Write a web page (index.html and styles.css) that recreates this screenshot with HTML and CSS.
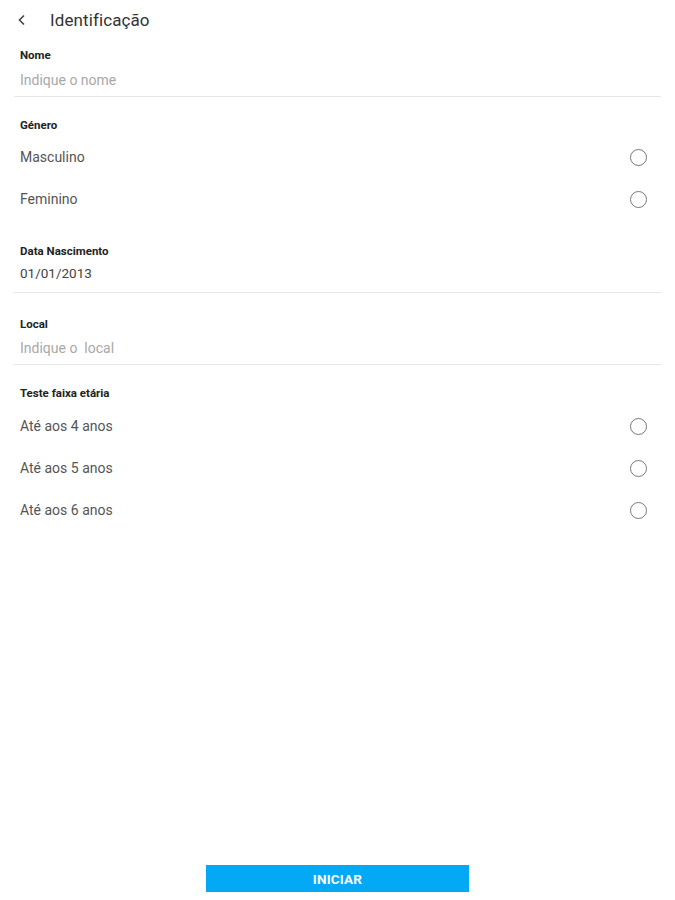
FILE: index.html
```html
<!DOCTYPE html>
<html lang="pt">
<head>
<meta charset="utf-8">
<title>Identificação</title>
<link rel="stylesheet" href="styles.css">
</head>
<body>
<div class="screen">
  <header class="header">
    <span class="back">
      <svg width="10" height="12" viewBox="0 0 10 12"><path d="M7 1.5 L2.5 6 L7 10.5" fill="none" stroke="#444" stroke-width="1.6"/></svg>
    </span>
    <span class="title">Identificação</span>
  </header>

  <section class="field field-nome">
    <div class="label">Nome</div>
    <div class="value placeholder">Indique o nome</div>
  </section>

  <section class="group group-genero">
    <div class="label">Género</div>
    <div class="option"><span>Masculino</span><span class="radio"></span></div>
    <div class="option"><span>Feminino</span><span class="radio"></span></div>
  </section>

  <section class="field field-data">
    <div class="label">Data Nascimento</div>
    <div class="value filled">01/01/2013</div>
  </section>

  <section class="field field-local">
    <div class="label">Local</div>
    <div class="value placeholder">Indique o&nbsp; local</div>
  </section>

  <section class="group group-idade">
    <div class="label">Teste faixa etária</div>
    <div class="option"><span>Até aos 4 anos</span><span class="radio"></span></div>
    <div class="option"><span>Até aos 5 anos</span><span class="radio"></span></div>
    <div class="option"><span>Até aos 6 anos</span><span class="radio"></span></div>
  </section>

  <div class="actions">
    <button class="btn">INICIAR</button>
  </div>
</div>
</body>
</html>
```

FILE: styles.css
```css
html, body {
  margin: 0;
  padding: 0;
  background: #ffffff;
}
body {
  font-family: Roboto, "Liberation Sans", Arial, sans-serif;
  color: #333;
}
.screen {
  height: 900px;
  display: flex;
  flex-direction: column;
  box-sizing: border-box;
}
.header {
  height: 40px;
  display: flex;
  align-items: center;
  padding-left: 17px;
}
.back {
  width: 33px;
  display: flex;
  align-items: center;
}
.back svg { display: block; }
.title {
  font-size: 17px;
  color: #333;
  letter-spacing: 0.1px;
}
.label {
  font-size: 11.5px;
  font-weight: 700;
  color: #222;
  line-height: 14px;
  padding-left: 20px;
}
.field {
  margin: 0 14px;
  border-bottom: 1px solid #e6e6e6;
}
.field .label { padding-left: 6px; }
.value {
  font-size: 14px;
  line-height: 18px;
  padding-left: 6px;
}
.placeholder { color: #a8a8a8; }
.filled { color: #444; font-size: 13.5px; }

.field-nome { padding-top: 8px; padding-bottom: 7px; }
.field-nome .value { margin-top: 9px; }

.group-genero { padding-top: 21px; }
.group-genero .label + .option { margin-top: 4px; }

.field-data { margin-top: 24px; padding-bottom: 10px; }
.field-data .value { margin-top: 6px; }

.field-local { padding-top: 24px; padding-bottom: 7px; }
.field-local .value { margin-top: 8px; }

.group-idade { padding-top: 21px; }
.group-idade .label + .option { margin-top: 5px; }

.option {
  height: 42px;
  display: flex;
  align-items: center;
  justify-content: space-between;
  padding: 0 28px 0 20px;
  font-size: 14px;
  color: #555;
}
.radio {
  width: 15px;
  height: 15px;
  border: 1.5px solid #777;
  border-radius: 50%;
  box-sizing: content-box;
}
.actions {
  margin-top: auto;
  display: flex;
  justify-content: center;
  padding-bottom: 8px;
}
.btn {
  width: 263px;
  height: 27px;
  border: none;
  background: #03a9f4;
  color: #ffffff;
  font-family: Roboto, "Liberation Sans", Arial, sans-serif;
  font-size: 13.5px;
  font-weight: 700;
  letter-spacing: 0.2px;
  padding: 0;
}
```
